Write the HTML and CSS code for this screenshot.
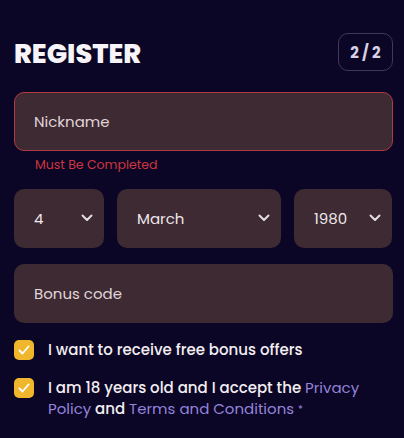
FILE: index.html
```html
<!DOCTYPE html>
<html>
<head>
<meta charset="utf-8">
<link rel="stylesheet" href="styles.css">
</head>
<body>
<div class="page">
  <div class="header">
    <h1 class="title">REGISTER</h1>
    <div class="step">2 / 2</div>
  </div>

  <div class="field error">
    <span class="placeholder">Nickname</span>
  </div>
  <div class="error-text">Must Be Completed</div>

  <div class="date-row">
    <div class="field select day">
      <span class="value">4</span>
      <svg class="chev" width="12" height="8" viewBox="0 0 12 8"><path d="M1.5 1.5 L6 6 L10.5 1.5" fill="none" stroke="#e6dde0" stroke-width="2" stroke-linecap="round" stroke-linejoin="round"/></svg>
    </div>
    <div class="field select month">
      <span class="value">March</span>
      <svg class="chev" width="12" height="8" viewBox="0 0 12 8"><path d="M1.5 1.5 L6 6 L10.5 1.5" fill="none" stroke="#e6dde0" stroke-width="2" stroke-linecap="round" stroke-linejoin="round"/></svg>
    </div>
    <div class="field select year">
      <span class="value">1980</span>
      <svg class="chev" width="12" height="8" viewBox="0 0 12 8"><path d="M1.5 1.5 L6 6 L10.5 1.5" fill="none" stroke="#e6dde0" stroke-width="2" stroke-linecap="round" stroke-linejoin="round"/></svg>
    </div>
  </div>

  <div class="field bonus">
    <span class="placeholder">Bonus code</span>
  </div>

  <div class="checks">
    <div class="check">
      <span class="box"><svg width="12" height="10" viewBox="0 0 12 10"><path d="M1.5 5.5 L4.5 8.5 L10.5 1.5" fill="none" stroke="#fff" stroke-width="1.8" stroke-linecap="round" stroke-linejoin="round"/></svg></span>
      <span class="label">I want to receive free bonus offers</span>
    </div>
    <div class="check">
      <span class="box"><svg width="12" height="10" viewBox="0 0 12 10"><path d="M1.5 5.5 L4.5 8.5 L10.5 1.5" fill="none" stroke="#fff" stroke-width="1.8" stroke-linecap="round" stroke-linejoin="round"/></svg></span>
      <span class="label">I am 18 years old and I accept the <a class="link">Privacy Policy</a> and <a class="link">Terms and Conditions</a> <span class="req">*</span></span>
    </div>
  </div>
</div>
</body>
</html>
```

FILE: styles.css
```css
* { box-sizing: border-box; }
html, body {
  margin: 0;
  padding: 0;
  background: #0b0625;
}
body {
  font-family: "Poppins", "Open Sans", "Liberation Sans", sans-serif;
  color: #f1ecef;
}
.page {
  padding: 33px 11px 0 14px;
  display: flex;
  flex-direction: column;
}
.header {
  display: flex;
  justify-content: space-between;
  align-items: center;
  height: 38px;
  margin-bottom: 21px;
}
.title {
  margin: 0;
  font-size: 27px;
  font-weight: 800;
  color: #f6f4f8;
  padding-top: 4px;
}
.step {
  width: 55px;
  height: 38px;
  border: 1px solid #3f3856;
  border-radius: 10px;
  display: flex;
  align-items: center;
  justify-content: center;
  font-size: 15px;
  font-weight: 700;
  color: #d7d1e3;
}
.field {
  height: 59px;
  background: #3d2a32;
  border-radius: 10px;
  display: flex;
  align-items: center;
  padding: 0 20px;
  font-size: 15px;
  color: #e0d6da;
}
.field.error {
  border: 1px solid #b13a41;
  padding-left: 19px;
}
.error-text {
  font-size: 12.5px;
  color: #cf3540;
  padding-left: 21px;
  margin-top: 5px;
  height: 18px;
  line-height: 18px;
}
.date-row {
  display: flex;
  gap: 13px;
  margin-top: 15px;
}
.select {
  justify-content: space-between;
  padding-right: 11px;
  color: #efe8eb;
}
.day { width: 90px; }
.month { width: 164px; }
.year { width: 98px; }
.chev { margin-top: -2px; }
.bonus {
  margin-top: 16px;
}
.checks {
  margin-top: 17px;
  display: flex;
  flex-direction: column;
  gap: 18px;
}
.check {
  display: flex;
  align-items: flex-start;
  gap: 14px;
}
.box {
  flex: none;
  width: 20px;
  height: 20px;
  border-radius: 5px;
  background: #f0b72d;
  display: flex;
  align-items: center;
  justify-content: center;
}
.label {
  font-size: 15px;
  font-weight: 500;
  line-height: 21px;
  color: #f3eef2;
  margin-top: -1px;
}
.link {
  color: #9583dc;
  font-weight: 400;
  text-decoration: none;
}
.req {
  color: #9583dc;
  font-size: 10px;
  font-weight: 400;
  vertical-align: 1px;
}
```
